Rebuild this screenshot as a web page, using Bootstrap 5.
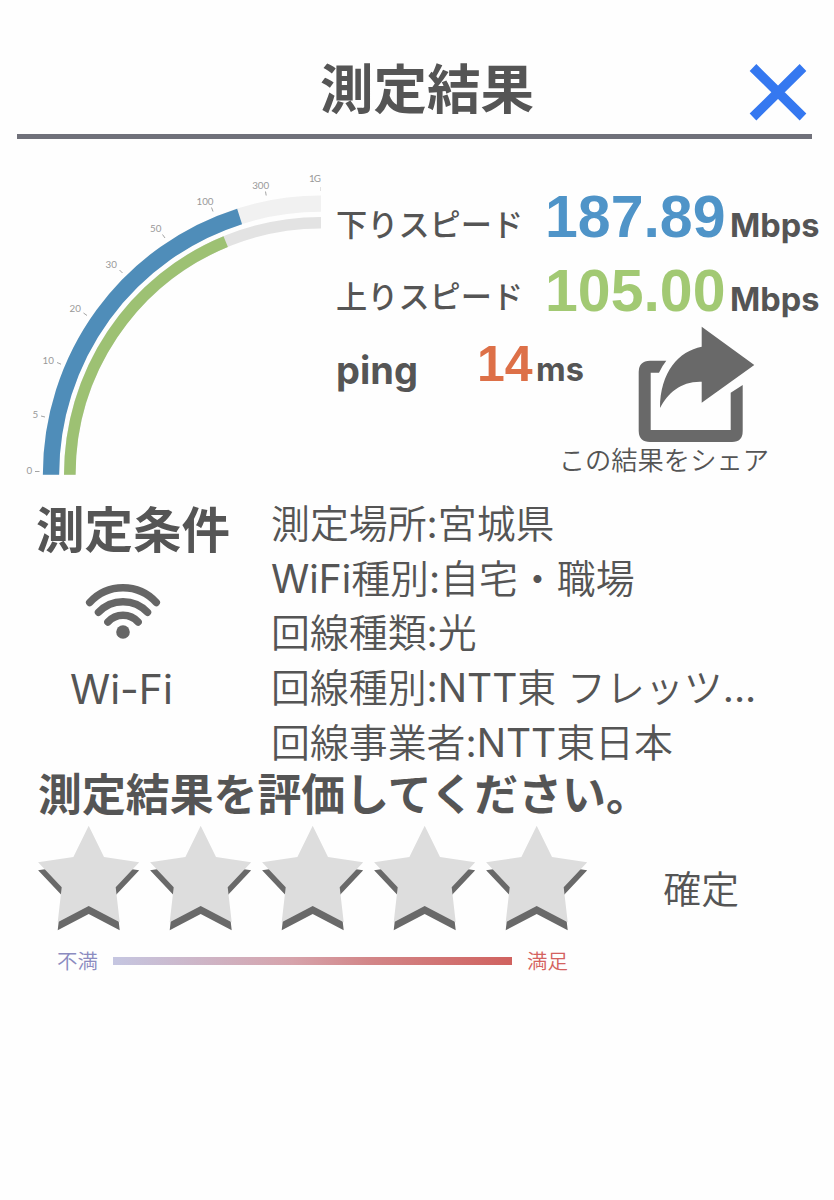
<!DOCTYPE html>
<html lang="ja">
<head>
<meta charset="utf-8">
<meta name="viewport" content="width=device-width, initial-scale=1">
<title>測定結果</title>
<link rel="stylesheet" href="https://cdn.jsdelivr.net/npm/bootstrap@5.3.0/dist/css/bootstrap.min.css">
<style>
body{background:#fefefe;color:#555;font-family:"Noto Sans CJK JP",sans-serif;line-height:1}
.screen{width:834px;height:1200px}
.head-bar{height:139px;margin:0 22px 0 17px;border-bottom:5px solid #70717a;padding:59px 5px 0 303px}
.head-title{font-size:53.5px;line-height:54px;font-weight:700}
.close-btn{width:58px;height:58px;margin-top:4px}
.gauge{width:321px;height:351px;flex:none}
.gauge text{font:9.8px Lato,sans-serif;fill:#999}
.readings{padding:48px 0 0 15px}
.speed-row{height:73.500px;line-height:60px;white-space:nowrap}
.speed-name{width:209px;font-size:31.2px;font-weight:500;position:relative;top:-1px}
.up-name{top:-3px}
.speed-num{width:185px;font:700 59px/60px "Liberation Sans",sans-serif}
.unit{font:700 32.500px/60px Inter,"Liberation Sans",sans-serif}
.blue{color:#4f94c8}.green{color:#a2c973}.orange{color:#dd7048}
.ping-name{width:141px;font:700 38px/60px Inter,sans-serif;position:relative;top:3px}
.ping-num{width:59px;font:700 50px/60px "Liberation Sans",sans-serif}
.share{width:212px;font-size:26.3px;font-weight:350;margin-top:-8.500px;margin-left:-26px}
.conditions{height:277px}
.cond-left{width:271px;padding:12px 0 0 36px}
.cond-title{font-size:48.5px;line-height:50px;font-weight:700}
.wifi-label{font:400 40.800px/48px Inter,sans-serif;padding-left:34px;margin-top:24px}
.cond-list{font-family:Inter,"Noto Sans CJK JP",sans-serif;font-size:38.9px;line-height:54.7px;font-weight:350;padding-top:7px}
.latin{font-weight:400}
.ask{font-size:43.9px;line-height:50px;font-weight:700;padding-left:38px}
.rating{padding:8px 0 0 38px;height:118px}
.stars{gap:10.6px}
.confirm{font-size:37.8px;font-weight:350;margin-left:76px;margin-top:43px}
.scale-row{font-size:20.5px;font-weight:350;padding-left:57px;height:50px}
.scale-line{width:399px;height:8px;margin:2px 15px 0;background:linear-gradient(90deg,#c5c6e1,#d6a3ab 45%,#d28587 65%,#d0625f)}
.low{color:#8b8bc0}.high{color:#d4625f}
</style>
</head>
<body>
<main class="screen overflow-hidden">
  <header class="head-bar d-flex justify-content-between align-items-start">
    <h1 class="head-title mb-0">測定結果</h1>
    <svg class="close-btn" viewBox="0 0 58 58" role="img" aria-label="閉じる"><path d="M4 4.500L54 54M54 4.500L4 54" stroke="#3578f0" stroke-width="9.5"/></svg>
  </header>

  <section class="d-flex">
    <svg class="gauge" viewBox="0 139 321 351">
      <g fill="none">
        <path d="M51 474.7A270 271 0 0 1 321 203.7" stroke="#f1f1f1" stroke-width="16.3"/>
        <path d="M69.8 474.7A251.2 252 0 0 1 321 222.7" stroke="#e3e3e3" stroke-width="11.6"/>
        <path d="M51 474.7A270 271 0 0 1 239.6 216.4" stroke="#4f8db9" stroke-width="16.3"/>
        <path d="M69.8 474.7A251.2 252 0 0 1 225.7 241.6" stroke="#9dc173" stroke-width="11.6"/>
        <path d="M35 471.5h4.500M41 416l4 1M57 362.500l4 1.700M83.500 313l3.500 2.500M119.500 270l3 3M162.500 234.500l2.500 3.500M211.500 207.500l1.500 4M265.500 191.500l.7 4" stroke="#999" stroke-width=".9"/>
        <path d="M320.700 187v4" stroke="#ccc" stroke-width=".7"/>
      </g>
      <text x="26.500" y="474">0</text><text x="32.500" y="417.500">5</text><text x="42.500" y="363.500">10</text><text x="69.500" y="312">20</text><text x="105.500" y="268">30</text><text x="150" y="231.500">50</text><text x="196.500" y="205">100</text><text x="252.200" y="189">300</text><text x="309" y="182" textLength="12">1G</text>
    </svg>
    <div class="readings">
      <div class="speed-row d-flex align-items-baseline"><span class="speed-name">下りスピード</span><span class="speed-num blue">187.89</span><span class="unit">Mbps</span></div>
      <div class="speed-row d-flex align-items-baseline"><span class="speed-name up-name">上りスピード</span><span class="speed-num green">105.00</span><span class="unit">Mbps</span></div>
      <div class="d-flex align-items-start">
        <div class="speed-row d-flex align-items-baseline"><span class="ping-name">ping</span><span class="ping-num orange">14</span><span class="unit">ms</span></div>
        <div class="share d-flex flex-column align-items-center">
          <svg width="118" height="118" viewBox="638 326 118 118" fill="#696969" style="margin-left:65px"><path d="M702.700 326.700L755.300 365L702.700 402.700V381.700C682 381 669 393 661 408C661 372 680 351 702.700 346.700Z"/><path d="M667.300 360.700H651Q639.700 361 639.700 372V431Q640 442 651 442H733Q743.700 442 743.700 431V385L731.700 392.700V430H651.700V372.700H660Q663 366 667.300 360.700Z"/></svg>
          <span class="text-nowrap" style="margin-top:2.5px">この結果をシェア</span>
        </div>
      </div>
    </div>
  </section>

  <section class="conditions d-flex">
    <div class="cond-left">
      <h2 class="cond-title mb-0">測定条件</h2>
      <svg class="d-block" width="76" height="58" viewBox="85 583 76 58" style="margin:31px 0 0 49px"><g fill="none" stroke="#666" stroke-width="7.500" stroke-linecap="round"><path d="M89.700 602.500A45 45 0 0 1 156.300 602.500M98.500 612.300A33.600 33.600 0 0 1 147.500 612.300M107.900 622A20.200 20.200 0 0 1 138.100 622"/></g><circle cx="123" cy="632" r="6.800" fill="#666"/></svg>
      <div class="wifi-label">Wi-Fi</div>
    </div>
    <div class="cond-list text-nowrap">
      <div>測定場所<span class="latin">:</span>宮城県</div><div><span class="latin">WiFi</span>種別<span class="latin">:</span>自宅・職場</div><div>回線種類<span class="latin">:</span>光</div><div>回線種別<span class="latin">:NTT</span>東 フレッツ<span class="latin">...</span></div><div>回線事業者<span class="latin">:NTT</span>東日本</div>
    </div>
  </section>

  <section>
    <h2 class="ask mb-0 text-nowrap">測定結果を評価してください。</h2>
    <svg width="0" height="0" class="position-absolute"><defs><g id="star"><path fill="#696969" d="M50.700 8.700L66 40L101.300 45.300L77.700 70.300L81.700 105.300L50.700 89L19.700 105.300L23.700 70.300L.1 45.300L35.400 40Z"/><path fill="#dddddd" d="M50.700 .7L66 32L101.300 37.300L77.700 62.300L81.700 97.300L50.700 81L19.700 97.300L23.700 62.300L.1 37.300L35.400 32Z"/></g></defs></svg>
    <div class="rating d-flex align-items-start">
      <div class="stars d-flex">
        <svg width="101.400" height="107"><use href="#star"/></svg><svg width="101.400" height="107"><use href="#star"/></svg><svg width="101.400" height="107"><use href="#star"/></svg><svg width="101.400" height="107"><use href="#star"/></svg><svg width="101.400" height="107"><use href="#star"/></svg>
      </div>
      <div class="confirm lh-1">確定</div>
    </div>
    <div class="scale-row d-flex align-items-center"><span class="low">不満</span><div class="scale-line"></div><span class="high">満足</span></div>
  </section>
</main>
<script src="https://cdn.jsdelivr.net/npm/bootstrap@5.3.0/dist/js/bootstrap.bundle.min.js"></script>
</body>
</html>
